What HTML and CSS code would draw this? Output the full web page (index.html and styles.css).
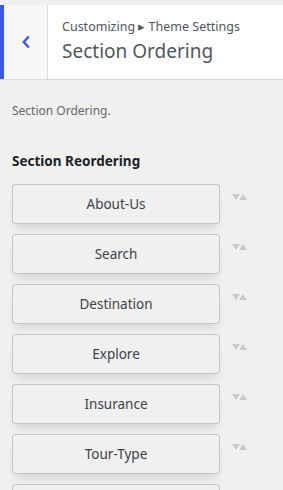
FILE: index.html
```html
<!DOCTYPE html>
<html lang="en">
<head>
    <meta charset="UTF-8">
    <meta name="viewport" content="width=device-width, initial-scale=1.0">
    <title>Section Ordering</title>
    <link rel="stylesheet" href="styles.css">
</head>
<body>
    <div class="panel">
        <div class="header">
            <button class="back" type="button">
                <svg width="10" height="16" viewBox="0 0 10 16"><path d="M7.8 2.5 L2.8 8 L7.8 13.5" fill="none" stroke="#3858e9" stroke-width="2.4"/></svg>
            </button>
            <div class="title">
                <span class="crumb">Customizing &#9656; Theme Settings</span>
                <h3>Section Ordering</h3>
            </div>
        </div>

        <div class="content">
            <p class="desc">Section Ordering.</p>
            <h4>Section Reordering</h4>
            <ul class="sections">
                <li><div class="item">About-Us</div><span class="arrows"><i class="down"></i><i class="up"></i></span></li>
                <li><div class="item">Search</div><span class="arrows"><i class="down"></i><i class="up"></i></span></li>
                <li><div class="item">Destination</div><span class="arrows"><i class="down"></i><i class="up"></i></span></li>
                <li><div class="item">Explore</div><span class="arrows"><i class="down"></i><i class="up"></i></span></li>
                <li><div class="item">Insurance</div><span class="arrows"><i class="down"></i><i class="up"></i></span></li>
                <li><div class="item">Tour-Type</div><span class="arrows"><i class="down"></i><i class="up"></i></span></li>
                <!-- next item sits below the fold -->
                <li><div class="item"></div><span class="arrows"><i class="down"></i><i class="up"></i></span></li>
            </ul>
        </div>
    </div>
</body>
</html>
```

FILE: styles.css
```css
body { margin: 0; background: #f0f0f0; font-family: "Noto Sans", "Open Sans", sans-serif; color: #50575e; overflow: hidden; }
.panel { padding-top: 5px; }
.header { display: flex; height: 74px; background: #fff; border-bottom: 1px solid #dcdcde; }
.back { width: 48px; padding: 0; margin: 0; border: none; border-left: 4px solid #3858e9; border-right: 1px solid #dcdcde; background: #f6f7f7; display: flex; align-items: center; justify-content: center; }
.title { padding: 13px 0 0 14px; }
.crumb { display: block; font-size: 12.5px; line-height: 18px; color: #50575e; }
.title h3 { margin: 2px 0 0; font-size: 19px; font-weight: 400; line-height: 26px; color: #50575e; }
.content { padding: 0 12px; }
.desc { margin: 22px 0 0; font-size: 12px; line-height: 18px; color: #646970; }
h4 { margin: 31px 0 0; font-size: 13.5px; line-height: 20px; font-weight: 700; color: #1d2327; }
.sections { list-style: none; margin: 13px 0 0; padding: 0; }
.sections li { display: flex; align-items: flex-start; margin-bottom: 10px; }
.item { width: 206px; height: 38px; border: 1px solid #c3c4c7; border-radius: 3px; background: #f0f0f0; box-shadow: 0 8px 10px -4px rgba(0, 0, 0, 0.12); display: flex; align-items: center; justify-content: center; font-size: 13.5px; color: #3c434a; }
.arrows { display: flex; margin: 10px 0 0 12px; }
.arrows i { width: 0; height: 0; border-left: 4.5px solid transparent; border-right: 4.5px solid transparent; }
.arrows .down { border-top: 6px solid #c8c9cc; margin-right: -1px; }
.arrows .up { border-bottom: 6px solid #c8c9cc; }
```
